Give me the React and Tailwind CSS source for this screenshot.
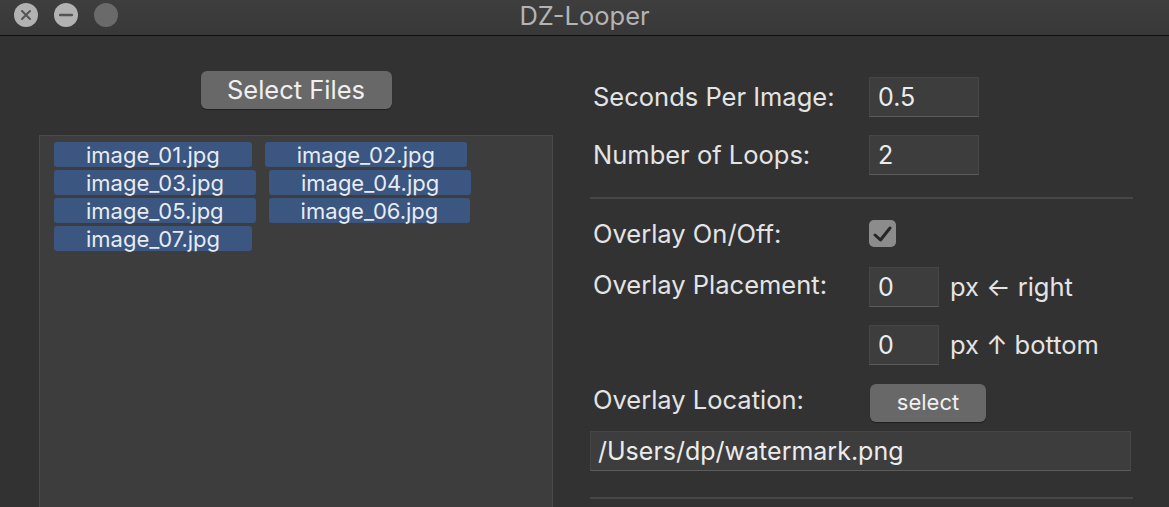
import React from 'react';

const files = [
  'image_01.jpg',
  'image_02.jpg',
  'image_03.jpg',
  'image_04.jpg',
  'image_05.jpg',
  'image_06.jpg',
  'image_07.jpg',
];

const TextBox = ({ value, className }) => (
  <div
    className={`h-[40px] shrink-0 flex items-center px-[8px] bg-[#3d3d3d] border border-[#464646] border-b-[#5c5c5c] text-[25px] leading-none text-[#ececec] ${className}`}
  >
    {value}
  </div>
);

const MacButton = ({ children, className }) => (
  <button
    className={`flex items-center justify-center rounded-[6px] bg-[#686868] text-[#f0f0f0] leading-none shadow-[0_1px_1px_rgba(0,0,0,0.4)] ${className}`}
  >
    {children}
  </button>
);

const Label = ({ children, className = '' }) => (
  <span className={`w-[279px] shrink-0 pl-[3px] leading-none ${className}`}>{children}</span>
);

export default function App() {
  return (
    <div
      className="w-[1169px] h-[507px] overflow-hidden bg-[#323232] flex flex-col"
      style={{ fontFamily: 'Inter, "Noto Sans", sans-serif' }}
    >
      {/* Title bar */}
      <div className="relative h-[36px] shrink-0 bg-gradient-to-b from-[#3e3e3e] to-[#383838] border-b border-[#111111] flex items-center justify-center">
        <div className="absolute left-[14px] top-[3px] flex gap-[16px]">
          <div className="w-[24px] h-[24px] rounded-full bg-[#b2b2b2] flex items-center justify-center">
            <svg width="12" height="12" viewBox="0 0 12 12">
              <path d="M2 2 L10 10 M10 2 L2 10" stroke="#555555" strokeWidth="2" strokeLinecap="round" />
            </svg>
          </div>
          <div className="w-[24px] h-[24px] rounded-full bg-[#b2b2b2] flex items-center justify-center">
            <svg width="14" height="12" viewBox="0 0 14 12">
              <path d="M1 6 H13" stroke="#555555" strokeWidth="2.4" strokeLinecap="round" />
            </svg>
          </div>
          <div className="w-[24px] h-[24px] rounded-full bg-[#6a6a6a]" />
        </div>
        <span className="text-[25.5px] leading-none text-[#b4b4b4] mb-[3px]">DZ-Looper</span>
      </div>

      {/* Content */}
      <div className="flex flex-1 min-h-0">
        {/* Left column */}
        <div className="ml-[39px] w-[514px] flex flex-col items-center pt-[35px]">
          <MacButton className="w-[191px] h-[38px] text-[25.5px]">Select Files</MacButton>
          <div className="mt-[26px] w-full flex-1 bg-[#3d3d3d] border border-[#4a4a4a] border-b-0 pl-[14px] pt-[6px] pr-[10px]">
            <div className="flex flex-wrap content-start gap-x-[13px] gap-y-[3px]">
              {files.map((f) => (
                <div
                  key={f}
                  className="h-[25px] px-[32px] flex items-center justify-center rounded-[3px] bg-[#3a5681] text-[22px] leading-none text-[#e8ecf2]"
                >
                  {f}
                </div>
              ))}
            </div>
          </div>
        </div>

        {/* Right column */}
        <div className="ml-[37px] w-[543px] flex flex-col pt-[41px] text-[25.5px] text-[#e4e4e4]">
          <div className="flex items-center">
            <Label>Seconds Per Image:</Label>
            <TextBox value="0.5" className="w-[110px]" />
          </div>
          <div className="flex items-center mt-[18px]">
            <Label>Number of Loops:</Label>
            <TextBox value="2" className="w-[110px]" />
          </div>

          <div className="mt-[22px] h-[2px] bg-[#474747]" />

          <div className="flex items-center mt-[21px]">
            <Label>Overlay On/Off:</Label>
            <div className="w-[27px] h-[27px] rounded-[5px] bg-[#8c8c8c]">
              <svg width="27" height="27" viewBox="0 0 27 27">
                <path d="M6 15 L11.5 20 L21 8" fill="none" stroke="#262626" strokeWidth="3" strokeLinecap="round" strokeLinejoin="round" />
              </svg>
            </div>
          </div>

          <div className="flex items-start mt-[20px]">
            <div className="h-[40px] flex items-center pb-[4px]">
              <Label>Overlay Placement:</Label>
            </div>
            <div className="flex flex-col gap-[18px]">
              <div className="flex items-center">
                <TextBox value="0" className="w-[70px]" />
                <span className="ml-[11px] leading-none">px ← right</span>
              </div>
              <div className="flex items-center">
                <TextBox value="0" className="w-[70px]" />
                <span className="ml-[11px] leading-none">px ↑ bottom</span>
              </div>
            </div>
          </div>

          <div className="flex items-center mt-[19px]">
            <Label className="w-[280px] mb-[6px]">Overlay Location:</Label>
            <MacButton className="w-[116px] h-[38px] text-[22px] pb-[2px]">select</MacButton>
          </div>

          <TextBox value="/Users/dp/watermark.png" className="mt-[9px] w-[541px] pl-[7px]" />

          <div className="mt-[26px] h-[2px] bg-[#474747]" />
        </div>
      </div>
    </div>
  );
}
